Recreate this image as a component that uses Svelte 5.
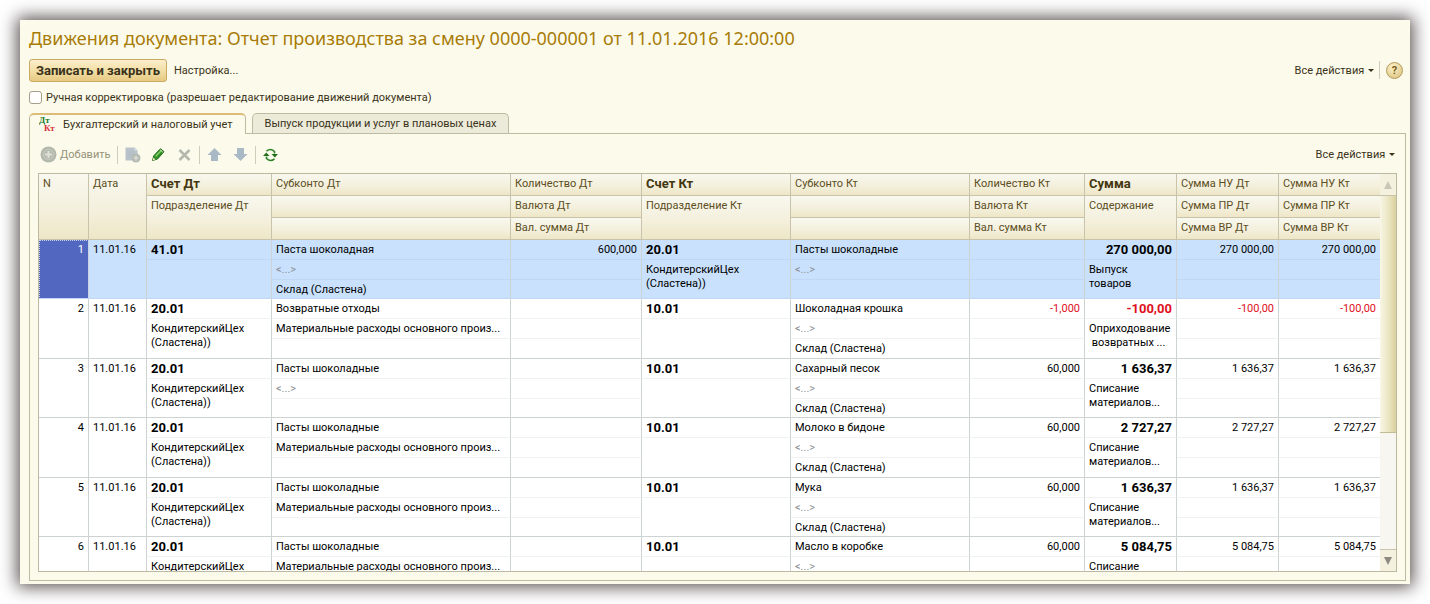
<script>
    let manual = $state(false);
    let activeTab = $state(0);
    let current = $state(1);

    const tabs = [
        "Бухгалтерский и налоговый учет",
        "Выпуск продукции и услуг в плановых ценах",
    ];

    const widths = [50, 58, 125, 239, 131, 149, 179, 115, 92, 102, 102];

    const dept = ["КондитерскийЦех", "(Сластена))"];
    const costs = "Материальные расходы основного произ...";
    const store = "Склад (Сластена)";
    const writeOff = ["Списание", "материалов..."];

    const rows = [
        {
            n: 1,
            dt: "41.01",
            deptDt: [],
            subDt: ["Паста шоколадная", "<...>", store],
            qtyDt: "600,000",
            kt: "20.01",
            deptKt: dept,
            subKt: ["Пасты шоколадные", "<...>", ""],
            qtyKt: "",
            sum: "270 000,00",
            note: ["Выпуск", "товаров"],
        },
        {
            n: 2,
            dt: "20.01",
            deptDt: dept,
            subDt: ["Возвратные отходы", costs, ""],
            qtyDt: "",
            kt: "10.01",
            deptKt: [],
            subKt: ["Шоколадная крошка", "<...>", store],
            qtyKt: "-1,000",
            sum: "-100,00",
            note: ["Оприходование", "\u00a0возвратных ..."],
        },
        material(3, "<...>", "Сахарный песок", "1 636,37"),
        material(4, costs, "Молоко в бидоне", "2 727,27"),
        material(5, costs, "Мука", "1 636,37"),
        material(6, costs, "Масло в коробке", "5 084,75"),
    ];

    // Write-off of a material into production
    function material(n, cost, name, sum) {
        return {
            n,
            dt: "20.01",
            deptDt: dept,
            subDt: ["Пасты шоколадные", cost, ""],
            qtyDt: "",
            kt: "10.01",
            deptKt: [],
            subKt: [name, "<...>", store],
            qtyKt: "60,000",
            sum,
            note: writeOff,
        };
    }

    const negative = (value) => value.startsWith("-");
</script>

{#snippet lines(list)}
    {#each list as line}
        <div>{line}</div>
    {/each}
{/snippet}

<main class="window">
    <h1>Движения документа: Отчет производства за смену 0000-000001 от 11.01.2016 12:00:00</h1>

    <div class="commands">
        <button type="button" class="primary">Записать и закрыть</button>
        <button type="button" class="link">Настройка...</button>
        <button type="button" class="link right">Все действия <i class="caret"></i></button>
        <span class="sep"></span>
        <button type="button" class="help" aria-label="Справка">?</button>
    </div>

    <label class="manual">
        <input type="checkbox" bind:checked={manual} />
        Ручная корректировка (разрешает редактирование движений документа)
    </label>

    <div class="tabs" role="tablist">
        {#each tabs as tab, i}
            <button
                type="button"
                role="tab"
                class="tab"
                class:active={activeTab === i}
                aria-selected={activeTab === i}
                onclick={() => (activeTab = i)}
            >
                {#if i === 0}
                    <svg width="18" height="17" viewBox="0 0 18 17" class="dtkt" aria-hidden="true">
                        <text x="0" y="7" fill="#1d7a2c">Дт</text>
                        <text x="5" y="15" fill="#d8323c">Кт</text>
                    </svg>
                {/if}
                {tab}
            </button>
        {/each}
    </div>

    <section class="panel">
        <div class="toolbar">
            <button type="button" class="tool add" disabled>
                <svg width="17" height="17" viewBox="0 0 17 17">
                    <circle cx="8.5" cy="8.5" r="8" fill="#b4b9ad" />
                    <circle cx="8.5" cy="8.5" r="5" fill="none" stroke="#c9cdc2" />
                    <path d="M8.5 5v7M5 8.5h7" stroke="#dfe1d8" stroke-width="2" />
                </svg>
                Добавить
            </button>
            <span class="sep"></span>
            <button type="button" class="tool" aria-label="Скопировать" disabled>
                <svg width="17" height="17" viewBox="0 0 17 17">
                    <path d="M1.500 1.500h9l3 3v10h-12z" fill="#b9c3cb" />
                    <path d="M10.500 1.500v3h3" fill="#d9dfe2" />
                    <path d="M3 6h7M3 8.500h6M3 11h5" stroke="#b0bbc3" />
                    <circle cx="12" cy="12" r="4.500" fill="#b4bbb3" />
                    <path d="M12 9.500v5M9.500 12h5" stroke="#d8dcd4" stroke-width="1.500" />
                </svg>
            </button>
            <button type="button" class="tool" aria-label="Изменить">
                <svg width="17" height="17" viewBox="0 0 17 17">
                    <path d="M2.500 14.500l1.300-4.800 6.700-7 3.500 3-6.500 7.300z" fill="#2f8f22" stroke="#1e6a16" />
                    <path d="M5.500 10.500l6-6.300" stroke="#83d06a" stroke-width="1.500" />
                    <path d="M2.500 14.500l1-3 2 1.900z" fill="#efe6b8" />
                    <path d="M9.800 3.500l3.300 3" stroke="#c7e6b8" />
                </svg>
            </button>
            <button type="button" class="tool" aria-label="Удалить" disabled>
                <svg width="17" height="17" viewBox="0 0 17 17">
                    <path d="M3.500 4l10 10M13.500 4l-10 10" stroke="#b5b8ae" stroke-width="2.600" />
                </svg>
            </button>
            <span class="sep"></span>
            <button type="button" class="tool" aria-label="Вверх" disabled>
                <svg width="17" height="17" viewBox="0 0 17 17">
                    <path d="M8.500 2l7 7h-3.500v6h-7v-6h-3.500z" fill="#a9b9c6" />
                </svg>
            </button>
            <button type="button" class="tool" aria-label="Вниз" disabled>
                <svg width="17" height="17" viewBox="0 0 17 17">
                    <path d="M8.500 15l7-7h-3.500v-6h-7v6h-3.500z" fill="#a9b9c6" />
                </svg>
            </button>
            <span class="sep"></span>
            <button type="button" class="tool" aria-label="Обновить">
                <svg width="17" height="17" viewBox="0 0 17 17">
                    <path d="M4.500 5.200q4-3.500 8 .3v2M12.500 12.800q-4 3.500-8-.3v-2" fill="none" stroke="#2e8428" stroke-width="1.600" />
                    <path d="M9.500 8h6.500l-3.200 3.500zM1 10h6.500l-3.200-3.500z" fill="#22701d" />
                </svg>
            </button>
            <button type="button" class="link right">Все действия <i class="caret"></i></button>
        </div>

        <div class="grid">
            <div class="viewport">
                <table>
                    <colgroup>
                        {#each widths as w}
                            <col style="width: {w}px" />
                        {/each}
                    </colgroup>
                    <thead>
                        <tr>
                            <th rowspan="3">N</th>
                            <th rowspan="3">Дата</th>
                            <th class="strong">Счет Дт</th>
                            <th>Субконто Дт</th>
                            <th>Количество Дт</th>
                            <th class="strong">Счет Кт</th>
                            <th>Субконто Кт</th>
                            <th>Количество Кт</th>
                            <th class="strong">Сумма</th>
                            <th>Сумма НУ Дт</th>
                            <th>Сумма НУ Кт</th>
                        </tr>
                        <tr>
                            <th rowspan="2">Подразделение Дт</th>
                            <th></th>
                            <th>Валюта Дт</th>
                            <th rowspan="2">Подразделение Кт</th>
                            <th></th>
                            <th>Валюта Кт</th>
                            <th rowspan="2">Содержание</th>
                            <th>Сумма ПР Дт</th>
                            <th>Сумма ПР Кт</th>
                        </tr>
                        <tr>
                            <th></th>
                            <th>Вал. сумма Дт</th>
                            <th></th>
                            <th>Вал. сумма Кт</th>
                            <th>Сумма ВР Дт</th>
                            <th>Сумма ВР Кт</th>
                        </tr>
                    </thead>
                    {#each rows as row}
                        <tbody class:selected={current === row.n} onclick={() => (current = row.n)}>
                            <tr>
                                <td rowspan="3" class="num end index">{row.n}</td>
                                <td rowspan="3" class="end">11.01.16</td>
                                <td class="strong">{row.dt}</td>
                                <td>{row.subDt[0]}</td>
                                <td class="num">{row.qtyDt}</td>
                                <td class="strong">{row.kt}</td>
                                <td>{row.subKt[0]}</td>
                                <td class="num" class:negative={negative(row.qtyKt)}>{row.qtyKt}</td>
                                <td class="num strong" class:negative={negative(row.sum)}>{row.sum}</td>
                                <td class="num" class:negative={negative(row.sum)}>{row.sum}</td>
                                <td class="num" class:negative={negative(row.sum)}>{row.sum}</td>
                            </tr>
                            <tr>
                                <td rowspan="2" class="end">{@render lines(row.deptDt)}</td>
                                <td class:empty={row.subDt[1] === "<...>"}>{row.subDt[1]}</td>
                                <td></td>
                                <td rowspan="2" class="end">{@render lines(row.deptKt)}</td>
                                <td class="empty">{row.subKt[1]}</td>
                                <td></td>
                                <td rowspan="2" class="end">{@render lines(row.note)}</td>
                                <td></td>
                                <td></td>
                            </tr>
                            <tr class="last">
                                <td>{row.subDt[2]}</td>
                                <td></td>
                                <td>{row.subKt[2]}</td>
                                <td></td>
                                <td></td>
                                <td></td>
                            </tr>
                        </tbody>
                    {/each}
                </table>
            </div>
            <div class="scrollbar">
                <button type="button" class="up" aria-label="Прокрутить вверх"></button>
                <div class="track"><div class="thumb"></div></div>
                <button type="button" class="down" aria-label="Прокрутить вниз"></button>
            </div>
        </div>
    </section>
</main>

<style>
    :global(body) {
        background: #fff;
    }

    .window {
        box-sizing: border-box;
        display: flex;
        flex-direction: column;
        height: calc(100vh - 40px);
        margin: 20px;
        padding: 6px 4px 3px 9px;
        background: #fcfbeb;
        box-shadow: 0 0 16px 3px #5a5252;
        font-family: Roboto, Arial, sans-serif;
        font-size: 11px;
        color: #3a3219;
        overflow: hidden;
    }

    h1 {
        margin: 0 0 8px;
        font-family: "Noto Sans", Tahoma, sans-serif;
        font-size: 18px;
        font-weight: 400;
        line-height: 24px;
        color: #a87b08;
        white-space: nowrap;
    }

    button {
        font: inherit;
        color: inherit;
        margin: 0;
        padding: 0;
        border: 0;
        background: none;
        white-space: nowrap;
    }

    .commands {
        display: flex;
        align-items: center;
        height: 24px;
        padding-right: 3px;
    }

    .primary {
        height: 23px;
        padding: 0 6px;
        margin-right: 7px;
        border: 1px solid #c9a964;
        border-radius: 3px;
        background: linear-gradient(#fbeecb, #f3dfa6 50%, #e6c983);
        font-size: 13px;
        font-weight: 700;
    }

    .right {
        margin-left: auto;
    }

    .caret {
        display: inline-block;
        margin-left: 1px;
        border: 3px solid transparent;
        border-top-color: #3a3219;
        border-bottom: 0;
        vertical-align: 2px;
    }

    .sep {
        width: 1px;
        height: 18px;
        margin: 0 6px 0 5px;
        background: #cfccb8;
    }

    .help {
        width: 17px;
        height: 17px;
        border: 1px solid #b39b5c;
        border-radius: 50%;
        background: radial-gradient(circle at 40% 30%, #fdf3cc, #d8bd76);
        font-weight: 700;
        line-height: 15px;
        color: #7a5c14;
    }

    .manual {
        display: flex;
        align-items: center;
        gap: 4px;
        height: 16px;
        margin: 7px 0 8px;
    }

    .manual input {
        appearance: none;
        width: 13px;
        height: 13px;
        margin: 0;
        border: 1px solid #a39f8c;
        border-radius: 3px;
        background: #fff;
    }

    .manual input:checked {
        background: #d9b65a;
    }

    .tabs {
        display: flex;
        gap: 6px;
        height: 21px;
        margin-bottom: -1px;
        z-index: 1;
    }

    .tab {
        display: flex;
        align-items: center;
        height: 20px;
        padding: 0 12px;
        border: 1px solid #bfbba3;
        border-bottom: 0;
        border-radius: 5px 5px 0 0;
        background: #ecebd9;
    }

    .tab.active {
        height: 21px;
        padding: 0 12px 1px 9px;
        border-top: 2px solid #dcbc78;
        background: #fcfbeb;
    }

    .dtkt {
        margin-right: 6px;
        font-family: "Liberation Serif", serif;
        font-size: 9px;
        font-weight: 700;
    }

    .panel {
        display: flex;
        flex: 1;
        flex-direction: column;
        min-height: 0;
        padding: 0 8px 8px;
        border: 1px solid #bfbba3;
    }

    .toolbar {
        display: flex;
        align-items: center;
        height: 39px;
        padding: 2px 2px 0 2px;
        box-sizing: border-box;
    }

    .tool {
        display: flex;
        align-items: center;
        gap: 3px;
        margin-right: 9px;
    }

    .tool.add {
        margin-right: 0;
        color: #96927a;
    }

    .toolbar .sep {
        margin: 0 6px;
    }

    .tool:has(+ .sep) {
        margin-right: 0;
    }

    .grid {
        display: flex;
        flex: 1;
        min-height: 0;
        border: 1px solid #bdb8a0;
        background: #fff;
    }

    .viewport {
        flex: 1;
        min-width: 0;
        overflow: hidden;
    }

    table {
        width: 100%;
        border-spacing: 0;
        table-layout: fixed;
    }

    th,
    td {
        box-sizing: border-box;
        height: 20px;
        padding: 0 4px;
        line-height: 14px;
        text-align: left;
        vertical-align: top;
        white-space: nowrap;
        overflow: hidden;
    }

    th {
        height: 22px;
        padding-top: 3px;
        border-right: 1px solid #c8c3ab;
        border-bottom: 1px solid #c8c3ab;
        background: linear-gradient(#f9f8ef, #f3efdb 60%, #eee6c6);
        font-weight: 400;
        color: #5c4e22;
    }

    td {
        padding-top: 3px;
        border-right: 1px solid #cdd2d3;
        border-bottom: 1px solid #f0f1f1;
        color: #000;
    }

    .strong {
        font-size: 13px;
        font-weight: 700;
    }

    th.strong {
        color: #43370f;
    }

    td.num {
        text-align: right;
    }

    td.end,
    .last td {
        border-bottom-color: #cdd2d3;
    }

    .last td {
        height: 19px;
    }

    tbody:nth-of-type(even) .last td {
        height: 20px;
    }

    td.empty {
        color: #8b8f94;
    }

    td.negative {
        color: #e0101c;
    }

    .selected td {
        background: #c9e1fd;
        border-bottom-color: #bdd7f4;
    }

    .selected td.index {
        outline: 1px dotted #c9d3f5;
        outline-offset: -1px;
        background: #5268c0;
        color: #fff;
    }

    .scrollbar {
        display: flex;
        flex-direction: column;
        width: 16px;
        background: #f7f6f0;
    }

    .scrollbar button {
        display: flex;
        align-items: center;
        justify-content: center;
        height: 22px;
        background: #f4f1de;
    }

    .scrollbar button::before {
        content: "";
        border: 4px solid transparent;
    }

    .scrollbar .up {
        border-bottom: 1px solid #c8c3ab;
    }

    .scrollbar .up::before {
        border-top: 0;
        border-bottom: 8px solid #c9c6b8;
    }

    .scrollbar .down {
        border-top: 1px solid #c8c3ab;
    }

    .scrollbar .down::before {
        border-bottom: 0;
        border-top: 8px solid #8d8b80;
    }

    .track {
        flex: 1;
    }

    .thumb {
        box-sizing: border-box;
        height: 67%;
        border-bottom: 1px solid #c2bb94;
        background: linear-gradient(90deg, #f8f6e6, #e9e3bd 60%, #d8d09c);
    }
</style>
